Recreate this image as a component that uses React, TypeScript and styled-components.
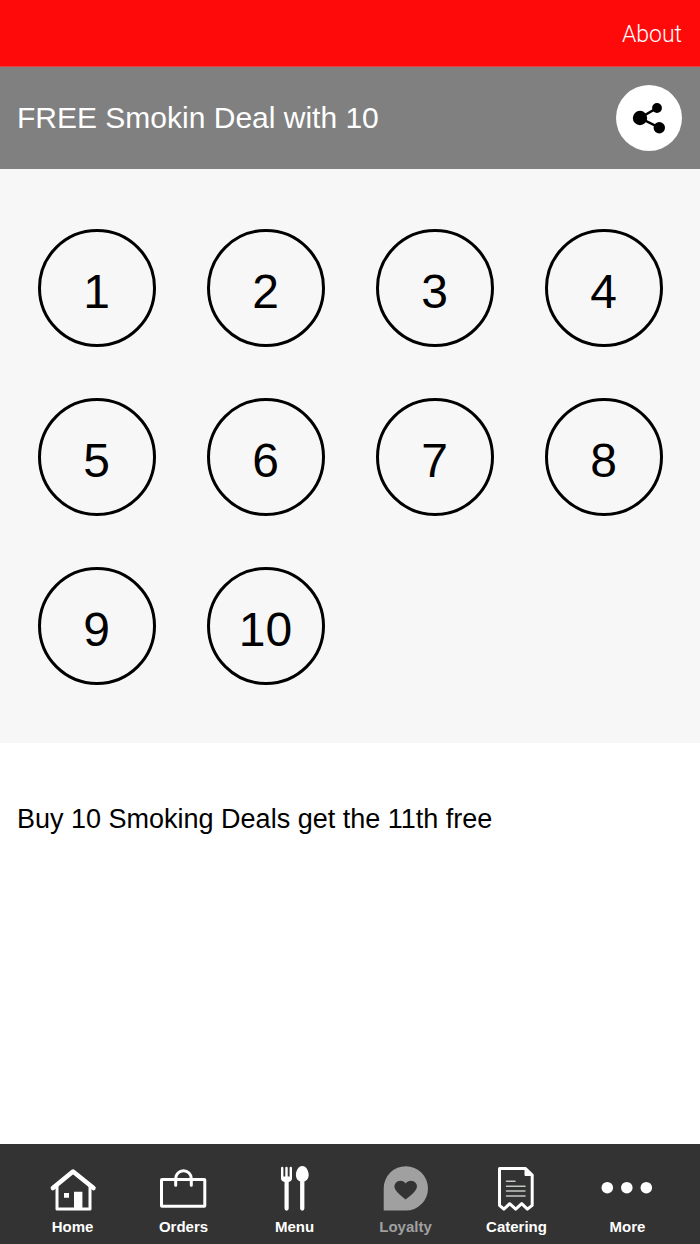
import React from "react";
import styled, { createGlobalStyle } from "styled-components";

const GlobalStyle = createGlobalStyle`
  *, *::before, *::after { box-sizing: border-box; }
  body {
    margin: 0;
    background: #ffffff;
    color: #000000;
    font-family: "Liberation Sans", Arial, sans-serif;
  }
`;

const Screen = styled.div`
  display: flex;
  flex-direction: column;
  min-height: 100vh;
`;

const TopBar = styled.header`
  display: flex;
  justify-content: flex-end;
  align-items: center;
  height: 67px;
  padding: 4px 18px 0;
  background: #ff0a0a;
  border-bottom: 1px solid #e8403c;
`;

const AboutLink = styled.a`
  color: #ffffff;
  font-family: Roboto, sans-serif;
  font-size: 23px;
  font-weight: 300;
  line-height: 30px;
  text-decoration: none;
`;

const TitleBar = styled.div`
  display: flex;
  justify-content: space-between;
  align-items: center;
  height: 102px;
  padding: 0 18px 0 17px;
  background: #808080;
`;

const Title = styled.h1`
  margin: 0;
  color: #ffffff;
  font-size: 30px;
  font-weight: 400;
  line-height: 36px;
`;

const ShareButton = styled.button`
  width: 66px;
  height: 66px;
  padding: 0;
  border: 0;
  border-radius: 50%;
  background: #ffffff;
  cursor: pointer;

  svg { display: block; }
`;

const StampCard = styled.ol`
  display: grid;
  grid-template-columns: repeat(4, 1fr);
  row-gap: 51px;
  justify-items: center;
  margin: 0;
  padding: 60px 12px 58px;
  list-style: none;
  background: #f7f7f7;
`;

const StampItem = styled.li`
  display: flex;
`;

const Stamp = styled.button`
  width: 118px;
  height: 118px;
  padding: 8px 0 0;
  border: 3px solid #000000;
  border-radius: 50%;
  background: transparent;
  color: #000000;
  font-family: inherit;
  font-size: 48px;
  line-height: 56px;
  cursor: pointer;
`;

const Description = styled.p`
  flex: 1;
  margin: 0;
  padding: 60px 17px;
  font-size: 27px;
  line-height: 32px;
`;

const TabBar = styled.nav`
  position: sticky;
  bottom: 0;
  display: grid;
  grid-template-columns: repeat(6, 1fr);
  height: 100px;
  padding: 0 17px;
  background: #333333;
`;

const Tab = styled.a<{ $active?: boolean }>`
  display: flex;
  flex-direction: column;
  align-items: center;
  gap: 7px;
  padding-top: 19px;
  color: ${(p) => (p.$active ? "#a0a0a0" : "#ffffff")};
  font-size: 15px;
  font-weight: 700;
  line-height: 18px;
  text-decoration: none;
`;

const TabIcon = styled.svg.attrs({
  viewBox: "0 0 57 48",
  width: 57,
  height: 48,
  fill: "none",
  stroke: "currentColor",
  strokeWidth: 3,
  strokeLinecap: "round",
  strokeLinejoin: "round",
  "aria-hidden": true,
})`
  display: block;
`;

const HomeIcon = () => (
  <TabIcon>
    <path d="M13 23V46H46V23" />
    <path d="M8.900 25 29 8.500 49.500 25" strokeWidth="4.500" />
    <path d="M20 30h5v4.700h-5zM30 28.700h8.400V46H30z" fill="currentColor" stroke="none" />
  </TabIcon>
);

const OrdersIcon = () => (
  <TabIcon>
    <rect x="6.500" y="16.500" width="43.300" height="26.700" rx="0.500" />
    <path d="M20.700 22.300V15.500a7.800 7.800 0 0 1 15.600 0v6.800" />
  </TabIcon>
);

const MenuIcon = () => (
  <TabIcon>
    <path
      d="M15 5a1.200 1.200 0 0 1 2.400 0v8.500h1.900V5a1.200 1.200 0 0 1 2.400 0v8.500h1.900V5a1.200 1.200 0 0 1 2.400 0v10.500c0 1.700-1.400 2.900-3.300 3.500v26.600a2 2 0 0 1-4.200 0V19c-2-.6-3.500-1.800-3.500-3.500z"
      fill="currentColor"
      stroke="none"
    />
    <path
      d="M36.300 3c4 0 6.400 5 6.400 9 0 3.400-1.800 5.600-4.300 6.400v27.200a2.100 2.100 0 0 1-4.300 0V18.400c-2.500-.8-4.200-3-4.200-6.400 0-4 2.400-9 6.400-9z"
      fill="currentColor"
      stroke="none"
    />
  </TabIcon>
);

const LoyaltyIcon = () => (
  <TabIcon>
    <path
      fillRule="evenodd"
      d="M6.700 47.600V25.200A22.150 22.200 0 1 1 28.900 47.600zM28.600 36.500c-1.500-1.600-5.500-4.400-8.200-7.300-3.100-3.400-3.900-6.600-1.700-9.300 2.600-3.100 7.800-2.900 10 .6 2.200-3.500 7.400-3.700 10-.6 2.200 2.700 1.400 5.900-1.700 9.300-2.700 2.900-6.900 5.700-8.400 7.300z"
      fill="currentColor"
      stroke="none"
    />
  </TabIcon>
);

const CateringIcon = () => (
  <TabIcon>
    <path d="M11.500 5.500H37.500L44.200 12V42.300L39.400 46.200 33.700 40.700 27.700 46.200 21.700 40.700 15.900 46.200 11.500 42.300z" />
    <path d="M37 5V12.500H44.500z" fill="currentColor" strokeWidth="1" />
    <path d="M18.500 18.300H27M18.500 23.200H37M18.500 28.100H37M18.500 33H37" strokeWidth="1.500" stroke="#c4c8c4" />
  </TabIcon>
);

const MoreIcon = () => (
  <TabIcon>
    <g fill="currentColor" stroke="none">
      <circle cx="8.300" cy="24.700" r="5.800" />
      <circle cx="27.800" cy="24.700" r="5.800" />
      <circle cx="47.300" cy="24.700" r="5.800" />
    </g>
  </TabIcon>
);

const tabs = [
  { label: "Home", Icon: HomeIcon },
  { label: "Orders", Icon: OrdersIcon },
  { label: "Menu", Icon: MenuIcon },
  { label: "Loyalty", Icon: LoyaltyIcon, active: true },
  { label: "Catering", Icon: CateringIcon },
  { label: "More", Icon: MoreIcon },
];

const stamps = Array.from({ length: 10 }, (_, i) => i + 1);

export default function App() {
  return (
    <Screen>
      <GlobalStyle />
      <TopBar>
        <AboutLink href="#about">About</AboutLink>
      </TopBar>
      <TitleBar>
        <Title>FREE Smokin Deal with 10</Title>
        <ShareButton type="button" aria-label="Share">
          <svg width="66" height="66" viewBox="0 0 66 66" aria-hidden="true">
            <path d="M41 23 24 33l19.300 9.700" fill="none" stroke="#000" strokeWidth="2.500" />
            <circle cx="24" cy="33" r="7.200" />
            <circle cx="41" cy="23" r="4.900" />
            <circle cx="43.300" cy="42.800" r="5.700" />
          </svg>
        </ShareButton>
      </TitleBar>
      <StampCard>
        {stamps.map((n) => (
          <StampItem key={n}>
            <Stamp type="button">{n}</Stamp>
          </StampItem>
        ))}
      </StampCard>
      <Description>Buy 10 Smoking Deals get the 11th free</Description>
      <TabBar>
        {tabs.map(({ label, Icon, active }) => (
          <Tab key={label} href={`#${label.toLowerCase()}`} $active={active} aria-current={active ? "page" : undefined}>
            <Icon />
            {label}
          </Tab>
        ))}
      </TabBar>
    </Screen>
  );
}
